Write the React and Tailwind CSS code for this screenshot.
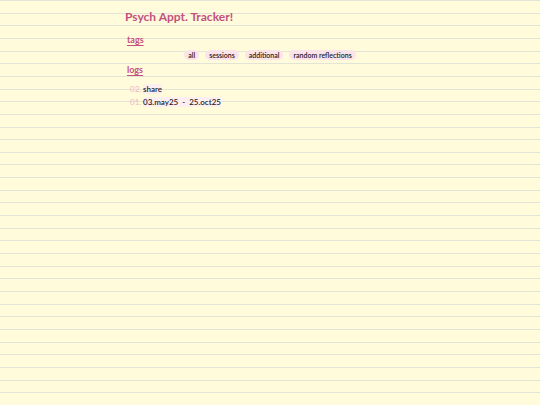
const tags = ["all", "sessions", "additional", "random reflections"];

const logs = [
  { n: "02.", title: "share" },
  { n: "01.", title: "03.may25  -  25.oct25" },
];

export default function App() {
  return (
    <div className="min-h-[405px] w-full bg-[#fffbdb] bg-[repeating-linear-gradient(to_bottom,#e3e4d8_0px,#e3e4d8_1px,transparent_1px,transparent_12.65px)] font-['Lato','Liberation_Sans',sans-serif] text-[#261c24]">
      <div className="mx-auto w-[290px] pt-[9px]">
        <h1 className="text-[12px] font-bold leading-[16px] text-[#c4507f]">
          Psych Appt. Tracker!
        </h1>

        <h2 className="mt-[9px] pl-[2px] text-[9px] font-bold leading-[12px] text-[#c4507f] underline underline-offset-[1.5px]">
          tags
        </h2>
        <div className="mt-[4px] flex justify-center gap-[6px]">
          {tags.map((t) => (
            <span
              key={t}
              className="rounded-full bg-[#fbe3ea] px-[4px] text-[7px] font-semibold leading-[10px]"
            >
              {t}
            </span>
          ))}
        </div>

        <h2 className="mt-[4px] pl-[2px] text-[9px] font-bold leading-[12px] text-[#c4507f] underline underline-offset-[1.5px]">
          logs
        </h2>
        <ul className="mt-[8px] flex flex-col gap-[3px] pl-[5px]">
          {logs.map((l) => (
            <li key={l.n} className="flex items-center gap-[4px] text-[8px] leading-[10px]">
              <span className="w-[9px] text-right text-[#f3b3c7]">{l.n}</span>
              <span className="whitespace-pre bg-[#fdeef0] font-semibold">{l.title}</span>
            </li>
          ))}
        </ul>
      </div>
    </div>
  );
}
